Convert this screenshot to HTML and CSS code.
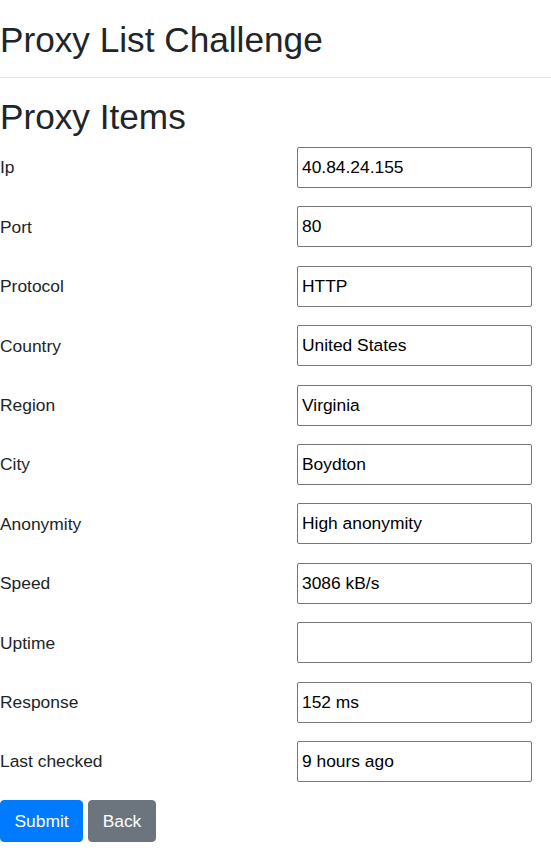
FILE: index.html
```html
<!DOCTYPE html>
<html lang="en">
<head>
<meta charset="utf-8">
<title>Proxy List Challenge</title>
<link rel="stylesheet" href="styles.css">
</head>
<body>
<header class="page-header">
  <h1 class="title">Proxy List Challenge</h1>
</header>
<hr class="divider">
<main>
  <h2 class="title">Proxy Items</h2>
  <form class="proxy-form">
    <div class="fields">
      <label class="field-label" for="ip">Ip</label>
      <input class="field-input" id="ip" type="text" value="40.84.24.155">
      <label class="field-label" for="port">Port</label>
      <input class="field-input" id="port" type="text" value="80">
      <label class="field-label" for="protocol">Protocol</label>
      <input class="field-input" id="protocol" type="text" value="HTTP">
      <label class="field-label" for="country">Country</label>
      <input class="field-input" id="country" type="text" value="United States">
      <label class="field-label" for="region">Region</label>
      <input class="field-input" id="region" type="text" value="Virginia">
      <label class="field-label" for="city">City</label>
      <input class="field-input" id="city" type="text" value="Boydton">
      <label class="field-label" for="anonymity">Anonymity</label>
      <input class="field-input" id="anonymity" type="text" value="High anonymity">
      <label class="field-label" for="speed">Speed</label>
      <input class="field-input" id="speed" type="text" value="3086 kB/s">
      <label class="field-label" for="uptime">Uptime</label>
      <input class="field-input" id="uptime" type="text" value="">
      <label class="field-label" for="response">Response</label>
      <input class="field-input" id="response" type="text" value="152 ms">
      <label class="field-label" for="checked">Last checked</label>
      <input class="field-input" id="checked" type="text" value="9 hours ago">
    </div>
    <div class="actions">
      <button class="btn btn-primary" type="submit">Submit</button>
      <button class="btn btn-secondary" type="button">Back</button>
    </div>
  </form>
</main>
</body>
</html>
```
FILE: styles.css
```css
html, body {
  margin: 0;
  padding: 0;
  background: #fff;
}
body {
  font-family: "Liberation Sans", Arial, sans-serif;
  font-size: 17.4px;
  color: #212529;
  line-height: 1.5;
}
.page-header {
  padding-top: 19px;
}
.title {
  margin: 0;
  font-size: 35.2px;
  font-weight: 400;
  line-height: 42px;
  color: #212529;
}
.divider {
  margin: 16px 0 18px;
  border: 0;
  border-top: 1px solid #e5e5e5;
  height: 0;
}
.proxy-form {
  margin-top: 9px;
}
.fields {
  display: grid;
  grid-template-columns: 297px 235px;
  row-gap: 18.4px;
  align-items: center;
}
.field-label {
  display: block;
}
.field-input {
  box-sizing: border-box;
  height: 41px;
  width: 235px;
  margin: 0;
  padding: 0 4px;
  border: 1px solid #767676;
  border-radius: 2px;
  font-family: "Liberation Sans", Arial, sans-serif;
  font-size: 17.4px;
  color: #000;
  background: #fff;
}
.actions {
  display: flex;
  gap: 5px;
  margin-top: 18px;
}
.btn {
  box-sizing: border-box;
  height: 42px;
  padding: 0 13.5px;
  border: 1px solid transparent;
  border-radius: 4px;
  font-family: "Liberation Sans", Arial, sans-serif;
  font-size: 17.4px;
  line-height: 1.5;
  color: #fff;
  cursor: pointer;
}
.btn-primary {
  background: #007bff;
  border-color: #007bff;
}
.btn-secondary {
  background: #6c757d;
  border-color: #6c757d;
}
```
